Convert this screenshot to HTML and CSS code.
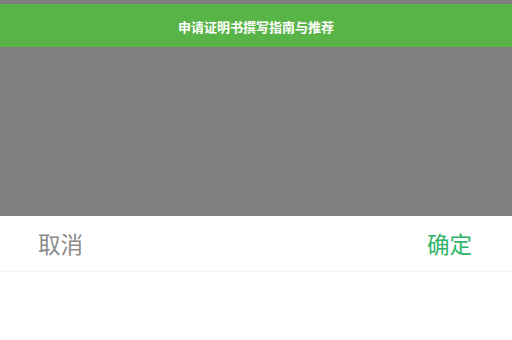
FILE: index.html
```html
<!DOCTYPE html>
<html lang="zh">
<head>
<meta charset="utf-8">
<link rel="stylesheet" href="styles.css">
</head>
<body>
<div class="page">
  <div class="topstrip"></div>
  <header class="bar"><h1 class="title">申请证明书撰写指南与推荐</h1></header>
  <div class="mask"></div>
  <div class="sheet">
    <div class="actions">
      <span class="btn cancel">取消</span>
      <span class="btn ok">确定</span>
    </div>
    <div class="body"></div>
  </div>
</div>
</body>
</html>
```
FILE: styles.css
```css
html, body { margin: 0; padding: 0; }
body { width: 512px; height: 340px; overflow: hidden; background: #fff; font-family: "Noto Sans CJK SC", "Noto Sans", sans-serif; }
.page { display: flex; flex-direction: column; height: 340px; }
.topstrip { height: 4px; background: #7f7d80; }
.bar { height: 43px; background: #59b447; border-top: 1px solid #66b356; box-sizing: border-box; display: flex; align-items: center; justify-content: center; }
.title { margin: 0; font-size: 13px; font-weight: 700; color: #fff; letter-spacing: 0; line-height: 1; }
.mask { height: 169px; background: #7f7f7f; }
.sheet { flex: 1; display: flex; flex-direction: column; }
.actions { height: 55px; display: flex; align-items: center; justify-content: space-between; padding: 0 40px 0 38px; border-bottom: 1px solid #f4f4f4; }
.btn { font-size: 22.5px; line-height: 1; }
.cancel { color: #8a8a8a; }
.ok { color: #2fb36a; }
.body { flex: 1; }
```
